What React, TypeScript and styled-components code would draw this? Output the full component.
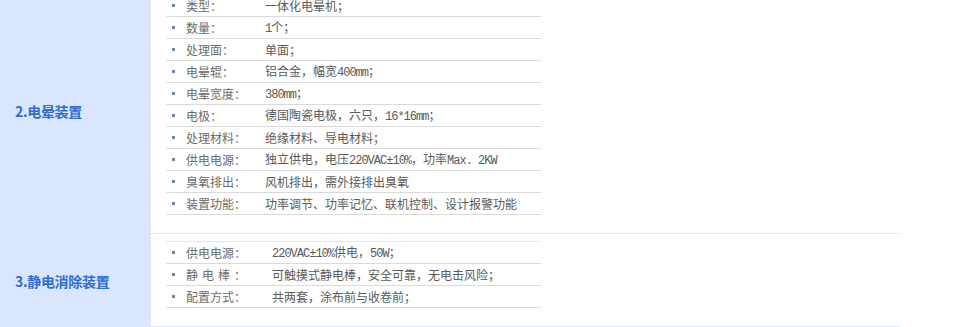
import React from "react";
import styled, { createGlobalStyle } from "styled-components";

const Global = createGlobalStyle`
  html, body { margin: 0; padding: 0; background: #ffffff; }
  body { font-family: "Noto Sans CJK SC", "Liberation Sans", sans-serif; }
`;

const Table = styled.div`
  width: 900px;
  margin-top: -13px;
  display: grid;
  grid-template-columns: 150px 750px;
`;

const Head = styled.div`
  background: #dae6fd;
  display: flex;
  align-items: center;
  padding-left: 15px;
  font-family: "Noto Sans CJK SC", "Liberation Sans", sans-serif;
  font-weight: 700;
  font-size: 14px;
  color: #2f6dd2;
  letter-spacing: -0.3px;
`;

const Body = styled.div`
  border-left: 1px dotted #c9cfd8;
  border-bottom: 1px solid #dce6f6;
  padding: 7px 0 18px 15px;
`;

const List = styled.ul`
  list-style: none;
  margin: 0;
  padding: 0;
  width: 375px;
  border-top: 1px solid #dfe7f3;
`;

const Item = styled.li`
  display: flex;
  align-items: center;
  height: 21px;
  border-bottom: 1px solid #dadada;
  font-size: 12px;
  color: #5e5e5e;
  white-space: nowrap;
`;

const Bullet = styled.span`
  width: 3px;
  height: 3px;
  background: #7088aa;
  margin: 0 11px 0 6px;
  flex: none;
`;

const Label = styled.span<{ $w: number; $spaced?: boolean }>`
  width: ${(p) => p.$w}px;
  flex: none;
  line-height: 14px;
  font-family: "Noto Sans CJK SC", sans-serif;
  color: #6c6c6c;
  letter-spacing: ${(p) => (p.$spaced ? "4px" : "0")};
`;

const Value = styled.span`
  line-height: 14px;
  font-family: "Noto Sans CJK SC", sans-serif;
  color: #5a5a5a;
`;

const Latin = styled.span`
  font-family: "Liberation Mono", monospace;
  font-size: 12px;
  letter-spacing: -1px;
`;

type Row = { label: string; value: string; spaced?: boolean };

const sections: { title: string; labelWidth: number; rows: Row[] }[] = [
  {
    title: "2.电晕装置",
    labelWidth: 79,
    rows: [
      { label: "类型：", value: "一体化电晕机；" },
      { label: "数量：", value: "1个；" },
      { label: "处理面：", value: "单面；" },
      { label: "电晕辊：", value: "铝合金，幅宽400mm；" },
      { label: "电晕宽度：", value: "380mm；" },
      { label: "电极：", value: "德国陶瓷电极，六只，16*16mm；" },
      { label: "处理材料：", value: "绝缘材料、导电材料；" },
      { label: "供电电源：", value: "独立供电，电压220VAC±10%，功率Max. 2KW" },
      { label: "臭氧排出：", value: "风机排出，需外接排出臭氧" },
      { label: "装置功能：", value: "功率调节、功率记忆、联机控制、设计报警功能" },
    ],
  },
  {
    title: "3.静电消除装置",
    labelWidth: 86,
    rows: [
      { label: "供电电源：", value: "220VAC±10%供电，50W；" },
      { label: "静电棒：", value: "可触摸式静电棒，安全可靠，无电击风险；", spaced: true },
      { label: "配置方式：", value: "共两套，涂布前与收卷前；" },
    ],
  },
];

// split a value into runs of Latin (rendered monospace) and CJK text
function renderValue(v: string) {
  const parts = v.split(/([A-Za-z0-9.*%± ]+)/);
  return parts.map((p, i) =>
    i % 2 === 1 ? <Latin key={i}>{p}</Latin> : <React.Fragment key={i}>{p}</React.Fragment>
  );
}

export default function App() {
  return (
    <>
      <Global />
      <Table>
        {sections.map((s) => (
          <React.Fragment key={s.title}>
            <Head>{s.title}</Head>
            <Body>
              <List>
                {s.rows.map((r) => (
                  <Item key={r.label}>
                    <Bullet />
                    <Label $w={s.labelWidth} $spaced={r.spaced}>
                      {r.label}
                    </Label>
                    <Value>{renderValue(r.value)}</Value>
                  </Item>
                ))}
              </List>
            </Body>
          </React.Fragment>
        ))}
      </Table>
    </>
  );
}
